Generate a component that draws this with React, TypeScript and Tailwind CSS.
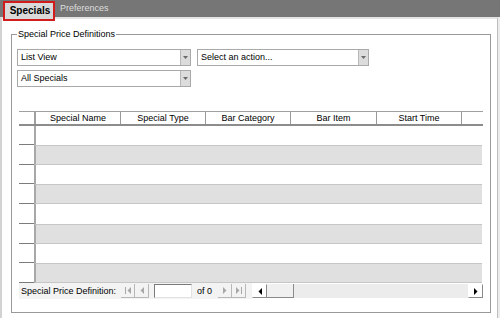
import React from "react";

const rowHeights = [19, 20, 19, 20, 20, 20, 19, 20];

const columns = [
  { label: "Special Name", w: "w-[86px]", first: true },
  { label: "Special Type", w: "w-[85px]" },
  { label: "Bar Category", w: "w-[85px]" },
  { label: "Bar Item", w: "w-[86px]" },
  { label: "Start Time", w: "w-[85px]" },
  { label: "", w: "flex-1" },
];

const ComboBox = ({ text, width }: { text: string; width: string }) => (
  <div
    className={`${width} h-[17px] flex items-stretch border border-[#a9a9a9] bg-white`}
  >
    <span className="flex-1 pl-[3px] leading-[15px] text-black">{text}</span>
    <span className="w-[10px] flex items-center justify-center bg-[#dcdcdc] border-l border-[#b8b8b8]">
      <svg width="5" height="3" viewBox="0 0 5 3">
        <path d="M0 0h5L2.5 3z" fill="#6a6a6a" />
      </svg>
    </span>
  </div>
);

const NavButton = ({ kind }: { kind: "first" | "prev" | "next" | "last" }) => (
  <span className="w-[14px] h-[14px] flex items-center justify-center border-r border-b border-[#b8b8b8]">
    <svg width="8" height="7" viewBox="0 0 8 7">
      {kind === "first" && (
        <>
          <rect x="1" y="0" width="1" height="7" fill="#a8a8a8" />
          <path d="M7 0v7L3.5 3.5z" fill="#a8a8a8" />
        </>
      )}
      {kind === "prev" && <path d="M6 0v7L2.5 3.5z" fill="#a8a8a8" />}
      {kind === "next" && <path d="M2 0v7l3.5-3.5z" fill="#a8a8a8" />}
      {kind === "last" && (
        <>
          <path d="M1 0v7l3.5-3.5z" fill="#a8a8a8" />
          <rect x="6" y="0" width="1" height="7" fill="#a8a8a8" />
        </>
      )}
    </svg>
  </span>
);

const ScrollArrow = ({ dir }: { dir: "left" | "right" }) => (
  <span className="w-[15px] h-[14px] flex items-center justify-center bg-white border border-t-white border-l-white border-r-[#8a8a8a] border-b-[#8a8a8a]">
    <svg width="4" height="7" viewBox="0 0 4 7">
      {dir === "left" ? (
        <path d="M4 0v7L0.5 3.5z" fill="#000" />
      ) : (
        <path d="M0 0v7l3.5-3.5z" fill="#000" />
      )}
    </svg>
  </span>
);

export default function App() {
  return (
    <div className="w-[500px] h-[318px] overflow-hidden bg-[#ececec] text-[9px] text-black font-['Liberation_Sans',Arial,sans-serif]">
      {/* tab strip */}
      <div className="h-[17px] bg-[#767676] flex items-center">
        <div className="self-start relative z-10 mt-[1px] ml-[3px] w-[52px] h-[20px] border-2 border-[#d01c1c] bg-[#d9d9d9] flex items-center justify-center pl-[2px] text-[10px] font-bold leading-none">
          Specials
        </div>
        <span className="ml-[5px] text-[#dedede] leading-none">Preferences</span>
      </div>

      {/* tab page */}
      <div className="w-[498px] h-[301px] bg-white border-t-2 border-t-[#e4e4e4] border-l-2 border-l-[#d2d2d2] border-r border-r-[#bdbdbd]">
        <fieldset className="mt-[9px] ml-[9px] w-[480px] h-[285px] border border-[#999999] p-0 m-0">
          <legend className="ml-[5px] px-[1px] leading-[12px]">
            Special Price Definitions
          </legend>

          <div className="mt-[9px] ml-[5px] flex gap-[6px]">
            <ComboBox text="List View" width="w-[174px]" />
            <ComboBox text="Select an action..." width="w-[172px]" />
          </div>
          <div className="mt-[4px] ml-[5px]">
            <ComboBox text="All Specials" width="w-[174px]" />
          </div>

          {/* grid */}
          <div className="mt-[24px] ml-[7px] w-[464px]">
            <div className="h-[15px] flex border-t border-t-[#a0a0a0] border-b-2 border-b-[#8c8c8c]">
              <span className="w-[15px]" />
              {columns.map((c, i) => (
                <span
                  key={i}
                  className={`${c.w} flex items-center justify-center leading-none ${
                    c.first
                      ? "border-l-2 border-l-[#a0a0a0]"
                      : "border-l border-l-[#9a9a9a]"
                  }`}
                >
                  {c.label}
                </span>
              ))}
            </div>

            {rowHeights.map((h, i) => (
              <div key={i} className="flex" style={{ height: h }}>
                <span className="w-[15px] border-b border-b-[#7c7c7c]" />
                <span
                  className={`w-[448px] border-l-2 border-l-[#a8a8a8] ${
                    i % 2 === 1
                      ? "bg-[#e0e0e0] border-y border-y-[#c6c6c6]"
                      : "bg-white"
                  }`}
                />
              </div>
            ))}

            {/* pager + scrollbar */}
            <div className="h-[16px] flex items-center">
              <div className="w-[233px] h-full flex items-center bg-[#f3f3f3]">
                <span className="ml-[2px] leading-none">Special Price Definition:</span>
                <span className="ml-[5px] flex">
                  <NavButton kind="first" />
                  <NavButton kind="prev" />
                </span>
                <span className="ml-[5px] w-[38px] h-[14px] bg-white border border-t-[#7a7a7a] border-l-[#7a7a7a] border-r-[#e2e2e2] border-b-[#e2e2e2]" />
                <span className="ml-[5px] leading-none">of 0</span>
                <span className="ml-[6px] flex">
                  <NavButton kind="next" />
                  <NavButton kind="last" />
                </span>
              </div>
              <div className="flex-1 h-[14px] flex">
                <ScrollArrow dir="left" />
                <span className="w-[27px] h-[14px] bg-[#f0f0f0] border-r border-b border-[#8a8a8a]" />
                <span className="flex-1 bg-[#ececec]" />
                <ScrollArrow dir="right" />
              </div>
            </div>
          </div>
        </fieldset>
      </div>
    </div>
  );
}
